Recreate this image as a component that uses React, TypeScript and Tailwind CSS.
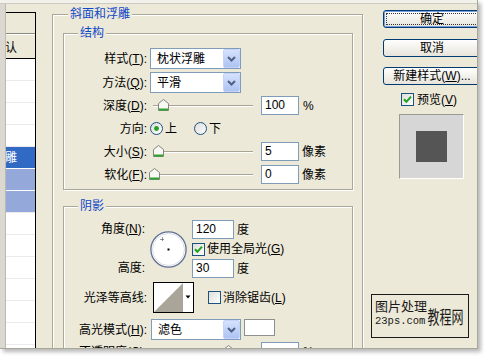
import type React from "react";

// Photoshop "图层样式" dialog, bevel & emboss page (XP skin)

const Mn = ({ k }: { k: string }) => (
  <>
    (<u>{k}</u>)
  </>
);

const Check = ({ on, className = "" }: { on?: boolean; className?: string }) => (
  <svg width="13" height="13" viewBox="0 0 13 13" className={`shrink-0 ${className}`}>
    <defs>
      <linearGradient id="cbg" x1="0" y1="0" x2="1" y2="1">
        <stop offset="0" stopColor="#dcdcd7" />
        <stop offset="1" stopColor="#ffffff" />
      </linearGradient>
    </defs>
    <rect x="0.5" y="0.5" width="12" height="12" fill="url(#cbg)" stroke="#1c5180" />
    {on && <path d="M3 6.2l2.4 2.6 4.6-5.2" fill="none" stroke="#21a121" strokeWidth="2" />}
  </svg>
);

const Radio = ({ on, className = "" }: { on?: boolean; className?: string }) => (
  <svg width="13" height="13" viewBox="0 0 13 13" className={`shrink-0 ${className}`}>
    <circle cx="6.5" cy="6.5" r="6" fill="url(#cbg)" stroke="#1c5180" />
    {on && <circle cx="6.5" cy="6.5" r="2.4" fill="#21a121" />}
  </svg>
);

function Select({ value, w = "w-[91px]" }: { value: string; w?: string }) {
  return (
    <div className={`flex h-[21px] ${w} shrink-0 items-center border border-[#7f9db9] bg-white`}>
      <span className="flex-1 pl-[6px]">{value}</span>
      <span className="flex h-full w-[17px] items-center justify-center rounded-[2px] border border-[#c3d3fd] bg-linear-to-b from-[#d6e2fd] to-[#aec3f3]">
        <svg width="9" height="6" viewBox="0 0 9 6">
          <path d="M1 1l3.5 3.5L8 1" fill="none" stroke="#4d6185" strokeWidth="2" />
        </svg>
      </span>
    </div>
  );
}

const Field = ({ value, w = "w-[38px]" }: { value: string; w?: string }) => (
  <div className={`h-[19px] ${w} shrink-0 border border-[#7f9db9] bg-white pl-[3px] leading-[17px]`}>
    {value}
  </div>
);

function Slider({ at }: { at: number }) {
  return (
    <svg width="106" height="19" viewBox="0 0 106 19" className="shrink-0 overflow-visible">
      <line x1="3" y1="9.5" x2="103" y2="9.5" stroke="#a7a496" />
      <line x1="3" y1="10.5" x2="103" y2="10.5" stroke="#ffffff" />
      <g transform={`translate(${at} 3)`}>
        <path d="M0.5 4.5L5.5 0.5l5 4v7h-10z" fill="#f7f7f4" stroke="#85847e" />
        <path d="M1 10.5h9" stroke="#2ca52c" strokeWidth="2" />
      </g>
    </svg>
  );
}

function Row({
  label,
  className = "",
  children,
}: {
  label: React.ReactNode;
  className?: string;
  children: React.ReactNode;
}) {
  return (
    <div className={`flex items-center ${className}`}>
      <div className="w-[83px] shrink-0 text-right">{label}</div>
      {children}
    </div>
  );
}

function Group({
  title,
  titleLeft,
  className = "",
  children,
}: {
  title: string;
  titleLeft: string;
  className?: string;
  children?: React.ReactNode;
}) {
  return (
    <div
      className={`relative shrink-0 border border-[#aca899] shadow-[inset_1px_1px_0_#fff,1px_1px_0_#fff] ${className}`}
    >
      <span className={`absolute -top-[8px] ${titleLeft} bg-[#ece9d8] px-[2px] text-[#1048c8]`}>
        {title}
      </span>
      {children}
    </div>
  );
}

function Btn({ def, className = "", children }: { def?: boolean; className?: string; children: React.ReactNode }) {
  return (
    <div
      className={`h-[18px] w-[98px] rounded-[3px] border border-[#003c74] bg-linear-to-b from-white to-[#e6e4da] ${
        def ? "p-[2px] shadow-[inset_0_0_0_1px_#7b9ee0]" : ""
      } ${className}`}
    >
      <div
        className={`flex h-full items-center justify-center ${def ? "border border-dotted border-[#333]" : ""}`}
      >
        {children}
      </div>
    </div>
  );
}

const listRows: { bg: string; text?: string }[] = [
  { bg: "bg-white border-[#ebebeb]" },
  { bg: "bg-white border-[#ebebeb]" },
  { bg: "bg-white border-[#ebebeb]" },
  { bg: "bg-white border-[#ebebeb]" },
  { bg: "bg-[#316ac5] border-white text-white", text: "斜面和浮雕" },
  { bg: "bg-[#94a9da] border-white" },
  { bg: "bg-[#94a9da] border-[#ebebeb]" },
  { bg: "bg-white border-[#ebebeb]" },
  { bg: "bg-white border-[#ebebeb]" },
  { bg: "bg-white border-[#ebebeb]" },
  { bg: "bg-white border-[#ebebeb]" },
  { bg: "bg-white border-[#ebebeb]" },
  { bg: "bg-white border-[#ebebeb]" },
  { bg: "bg-white border-[#ebebeb]" },
];

export default function App() {
  return (
    <div className="h-[356px] w-[484px] overflow-hidden bg-white font-['Liberation_Sans','Noto_Sans_CJK_SC',sans-serif] text-[12px] leading-[14px] text-black">
      <div className="relative flex h-[349px] w-[478px] flex-col overflow-hidden border-r border-b border-[#a9a69a] bg-[#ece9d8] shadow-[3px_3px_4px_rgba(0,0,0,0.28)]">
        <div className="h-[4px] shrink-0 border-b border-[#cdcabf] bg-[#f2f1ec]" />
        <div className="flex min-h-0 flex-1">
          <div className="w-[6px] shrink-0 border-r border-[#bcb9ae] bg-[#dad8d0]" />

          {/* style list */}
          <div className="mt-[8px] h-[400px] w-[30px] shrink-0 border-t border-r border-black bg-white">
            <div className="h-[21px] border-b border-[#8d8a7f] bg-[#ece9d8]" />
            <div className="flex h-[25px] items-center justify-end overflow-hidden whitespace-nowrap border-t border-b border-t-white border-b-black bg-[#ece9d8] pt-[3px] pr-[18px]">
              <span>混合选项:默认</span>
            </div>
            {listRows.map((r, i) => (
              <div
                key={i}
                className={`flex h-[22px] items-center justify-end overflow-hidden whitespace-nowrap border-b pr-[18px] ${r.bg}`}
              >
                {r.text && <span>{r.text}</span>}
              </div>
            ))}
          </div>

          {/* bevel and emboss */}
          <Group
            title="斜面和浮雕"
            titleLeft="left-[15px]"
            className="ml-[16px] mt-[10px] h-[400px] w-[311px] pl-[10px] pt-[18px]"
          >
            <Group title="结构" titleLeft="left-[14px]" className="w-[290px] pt-[14px] pb-[5px]">
              <Row label={<>样式<Mn k="T" />:</>} className="h-[21px]">
                <div className="ml-[3px]">
                  <Select value="枕状浮雕" />
                </div>
              </Row>
              <Row label={<>方法<Mn k="Q" />:</>} className="mt-[3px] h-[21px]">
                <div className="ml-[3px]">
                  <Select value="平滑" />
                </div>
              </Row>
              <Row label={<>深度<Mn k="D" />:</>} className="mt-[3px] h-[19px]">
                <div className="ml-[3px] flex items-center">
                  <Slider at={8} />
                  <div className="ml-[5px]">
                    <Field value="100" />
                  </div>
                  <span className="ml-[4px]">%</span>
                </div>
              </Row>
              <Row label="方向:" className="mt-[4px] h-[19px]">
                <div className="ml-[3px] flex items-center">
                  <Radio on />
                  <span className="ml-[2px]">上</span>
                  <Radio className="ml-[17px]" />
                  <span className="ml-[2px]">下</span>
                </div>
              </Row>
              <Row label={<>大小<Mn k="S" />:</>} className="mt-[4px] h-[19px]">
                <div className="ml-[3px] flex items-center">
                  <Slider at={3} />
                  <div className="ml-[5px]">
                    <Field value="5" />
                  </div>
                  <span className="ml-[3px]">像素</span>
                </div>
              </Row>
              <Row label={<>软化<Mn k="F" />:</>} className="mt-[4px] h-[19px]">
                <div className="ml-[3px] flex items-center">
                  <Slider at={-1} />
                  <div className="ml-[5px]">
                    <Field value="0" />
                  </div>
                  <span className="ml-[3px]">像素</span>
                </div>
              </Row>
            </Group>

            <Group title="阴影" titleLeft="left-[14px]" className="mt-[16px] h-[200px] w-[290px] pt-[13px]">
              <div className="flex h-[58px]">
                <div className="flex w-[83px] shrink-0 flex-col justify-between pr-[2px] text-right leading-[19px]">
                  <div>
                    角度<Mn k="N" />:
                  </div>
                  <div>高度:</div>
                </div>
                <div className="ml-[3px] self-center">
                  <svg width="37" height="37" viewBox="0 0 37 37">
                    <circle cx="18.5" cy="18.5" r="17.6" fill="#fff" stroke="#5f7092" strokeWidth="1.3" />
                    <circle cx="18.5" cy="18.5" r="16" fill="none" stroke="#d9dce4" />
                    <rect x="17.5" y="17.5" width="2" height="2" fill="#000" />
                    <path d="M12.5 6.5v4M10.5 8.5h4" stroke="#333" strokeDasharray="1 1" />
                  </svg>
                </div>
                <div className="ml-[5px] flex flex-col">
                  <div className="flex h-[19px] items-center">
                    <Field value="120" w="w-[42px]" />
                    <span className="ml-[3px]">度</span>
                  </div>
                  <div className="flex h-[20px] items-center">
                    <Check on />
                    <span className="ml-[2px]">
                      使用全局光<Mn k="G" />
                    </span>
                  </div>
                  <div className="flex h-[19px] items-center">
                    <Field value="30" w="w-[42px]" />
                    <span className="ml-[3px]">度</span>
                  </div>
                </div>
              </div>

              <Row label="光泽等高线:" className="mt-[4px] h-[31px] pr-[2px]">
                <svg width="41" height="31" viewBox="0 0 41 31" className="ml-[6px] shrink-0">
                  <rect x="0.5" y="0.5" width="40" height="30" fill="#fff" stroke="#000" />
                  <path d="M1 30L30 1v29z" fill="#a9a598" />
                  <path d="M32.5 13.5h5l-2.5 3z" fill="#000" />
                </svg>
                <Check className="ml-[14px]" />
                <span className="ml-[2px]">
                  消除锯齿<Mn k="L" />
                </span>
              </Row>

              <Row label={<>高光模式<Mn k="H" />:</>} className="mt-[6px] h-[21px]">
                <div className="ml-[4px]">
                  <Select value="滤色" w="w-[90px]" />
                </div>
                <div className="ml-[3px] h-[17px] w-[31px] self-start border border-[#8f8f8f] bg-white" />
              </Row>

              <Row label={<>不透明度<Mn k="C" />:</>} className="mt-[2px] h-[19px]">
                <div className="ml-[3px] flex items-center">
                  <Slider at={73} />
                  <div className="ml-[5px]">
                    <Field value="" />
                  </div>
                  <span className="ml-[4px]">%</span>
                </div>
              </Row>
            </Group>
          </Group>

          {/* buttons */}
          <div className="ml-[20px] mt-[6px] flex w-[98px] shrink-0 flex-col">
            <Btn def>确定</Btn>
            <Btn className="mt-[11px]">取消</Btn>
            <Btn className="mt-[10px]">
              新建样式<Mn k="W" />...
            </Btn>
            <div className="mt-[8px] flex h-[13px] items-center pl-[18px]">
              <Check on />
              <span className="ml-[3px]">
                预览<Mn k="V" />
              </span>
            </div>
            <div className="ml-[16px] mt-[8px] flex h-[65px] w-[65px] items-center justify-center border border-t-[#9c9a94] border-l-[#9c9a94] border-r-white border-b-white bg-[#d6d6d6]">
              <div className="h-[31px] w-[31px] bg-[#555555]" />
            </div>
          </div>
        </div>

        {/* watermark stamped over the screenshot */}
        <div className="absolute top-[294px] left-[371px] h-[44px] w-[98px] border border-[#1a1a1a] px-[3px] pt-[4px] text-[#1a1a1a]">
          <div className="text-[13px] leading-[15px]">图片处理</div>
          <div className="flex items-end">
            <span className="font-['Liberation_Mono',monospace] text-[10.5px] leading-[14px]">23ps.com</span>
            <span className="ml-[2px] inline-block origin-bottom scale-y-150 text-[12px] leading-[13px]">教程网</span>
          </div>
        </div>
      </div>
    </div>
  );
}
